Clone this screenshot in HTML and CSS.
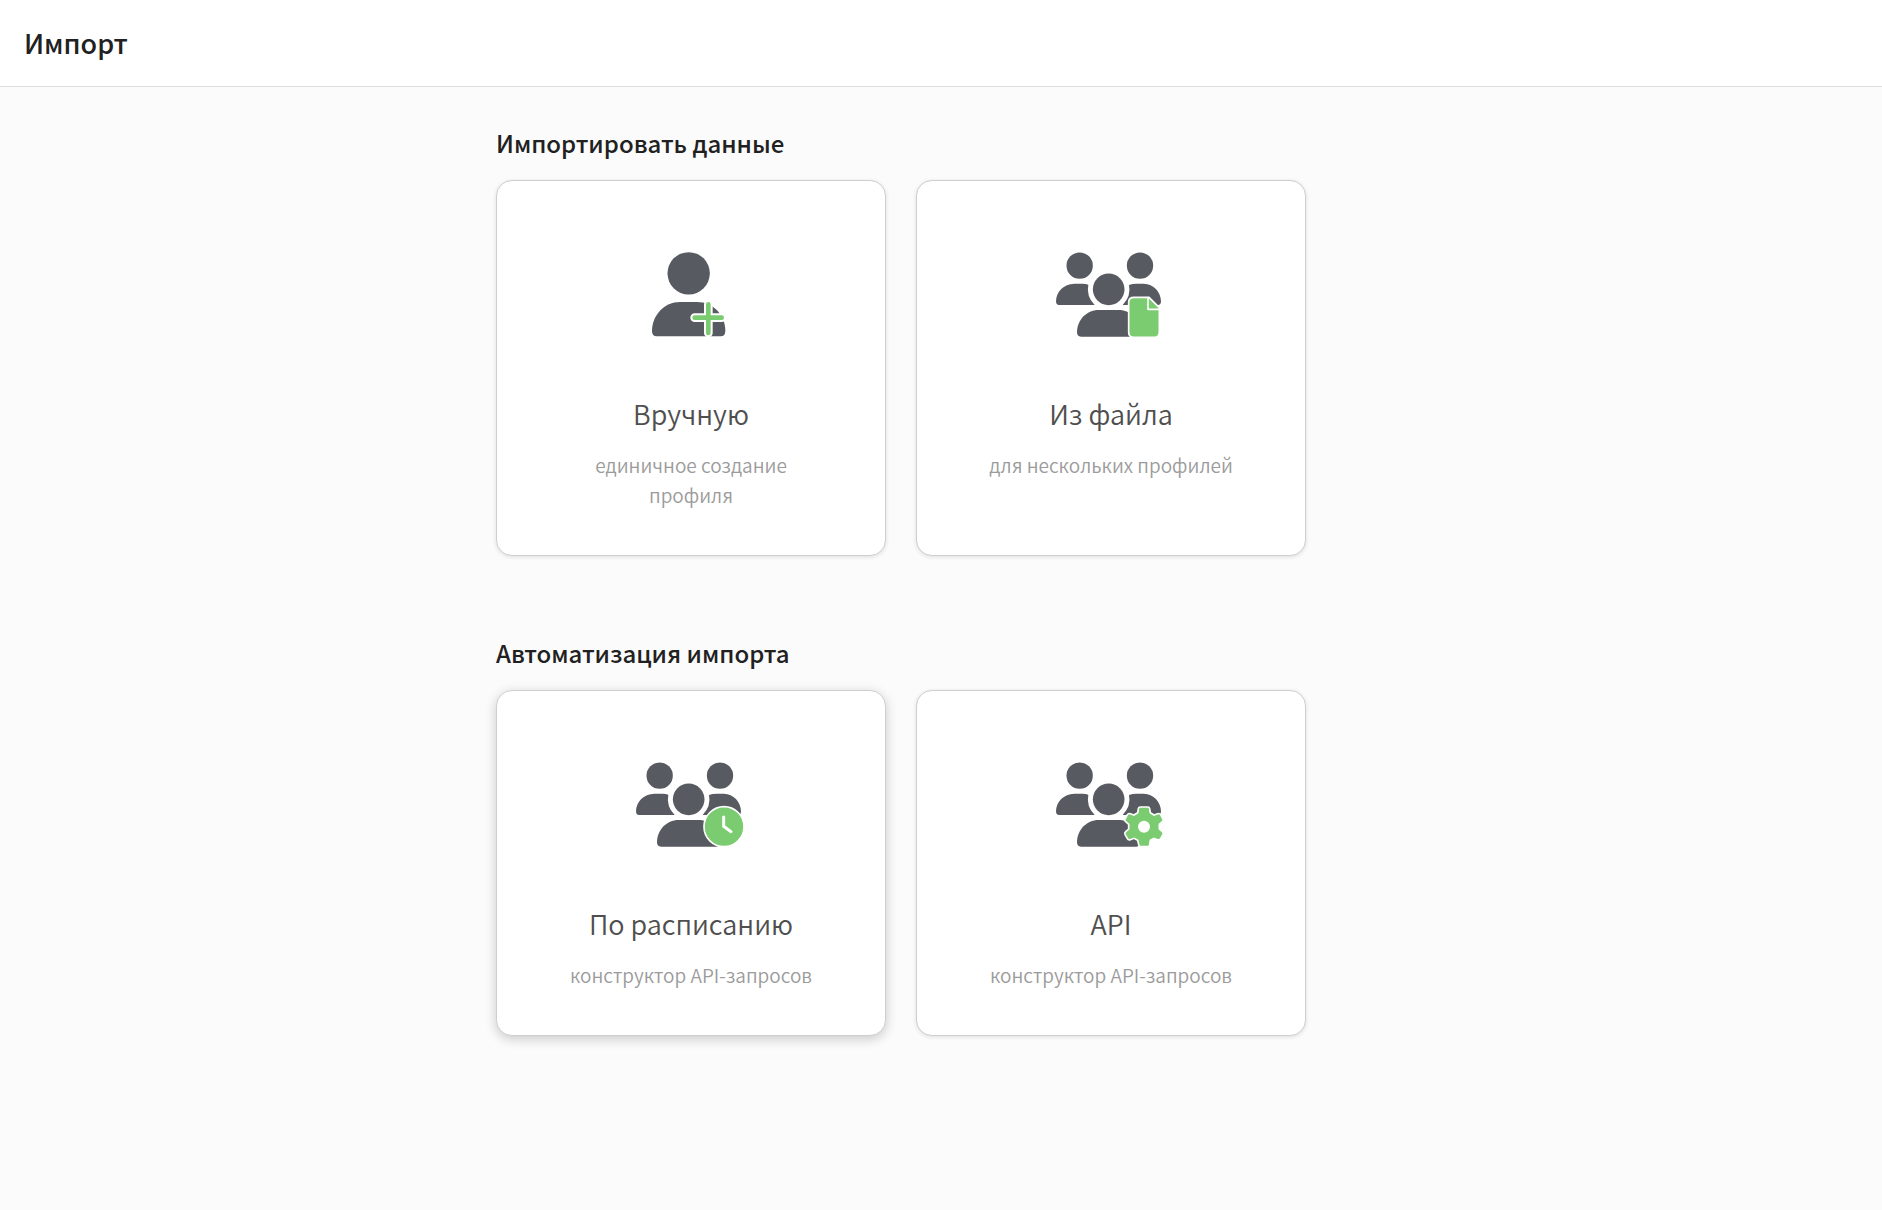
FILE: index.html
```
<!DOCTYPE html>
<html lang="ru">
<head>
    <meta charset="UTF-8">
    <meta name="viewport" content="width=device-width, initial-scale=1.0">
    <title>Импорт</title>
    <link rel="stylesheet" href="styles.css">
</head>
<body>
    <svg class="sprite" aria-hidden="true">
        <symbol id="people" viewBox="33 15 360 300">
            <circle cx="119" cy="89" r="39.500"/>
            <circle cx="300" cy="89" r="39.500"/>
            <path d="M48 196C48 168 71 143 103 143H128Q137 143 145 146Q138 180 164 207H57Q48 207 48 196Z"/>
            <path d="M363 196C363 168 340 143 312 143H290Q277 143 267 147Q274 180 248 207H354Q363 207 363 196Z"/>
            <circle cx="206" cy="160" r="47.500"/>
            <path d="M111 288C111 253 139 222 176 222H236C273 222 301 253 301 288Q301 302 289 302H123Q111 302 111 288Z"/>
        </symbol>
    </svg>

    <header class="header">
        <h1 class="header-title">Импорт</h1>
    </header>

    <main class="content">
        <section class="section">
            <h2 class="section-title">Импортировать данные</h2>
            <div class="cards">
                <a class="card" href="#manual">
                    <svg class="card-icon" viewBox="3 15 360 300" aria-hidden="true">
                        <circle cx="176" cy="112" r="63.500"/>
                        <path d="M66 285C66 238 103 198 150 198H201C250 198 286 238 286 285Q286 301 272 301H80Q66 301 66 285Z"/>
                        <path class="plus-outline" d="M235 205V291M194 245H275"/>
                        <path class="plus" d="M235 205V291M194 245H275"/>
                    </svg>
                    <span class="card-title">Вручную</span>
                    <span class="card-text">единичное создание профиля</span>
                </a>
                <a class="card" href="#file">
                    <svg class="card-icon" viewBox="33 15 360 300" aria-hidden="true">
                        <use href="#people" x="33" y="15" width="360" height="300"/>
                        <path class="badge" d="M282 184H327L358 215V289Q358 304 343 304H282Q266 304 266 289V199Q266 184 282 184Z"/>
                        <path class="fold" d="M324 185V220H357"/>
                    </svg>
                    <span class="card-title">Из файла</span>
                    <span class="card-text">для нескольких профилей</span>
                </a>
            </div>
        </section>

        <section class="section">
            <h2 class="section-title">Автоматизация импорта</h2>
            <div class="cards">
                <a class="card card-active" href="#schedule">
                    <svg class="card-icon" viewBox="33 15 360 300" aria-hidden="true">
                        <use href="#people" x="33" y="15" width="360" height="300"/>
                        <circle class="badge" cx="312" cy="242" r="60"/>
                        <path class="hands" d="M311 213V241L333 257"/>
                    </svg>
                    <span class="card-title">По расписанию</span>
                    <span class="card-text">конструктор API-запросов</span>
                </a>
                <a class="card" href="#api">
                    <svg class="card-icon" viewBox="33 15 360 300" aria-hidden="true">
                        <use href="#people" x="33" y="15" width="360" height="300"/>
                        <path class="badge" d="M301 183H324Q328 183 329 188L331 200L342 207L353 203Q359 201 362 206L369 219Q371 224 367 227L358 235V249L367 257Q371 260 369 265L362 278Q359 283 353 281L342 277L331 283L329 296Q328 302 323 302H302Q297 302 296 296L293 283L282 277L271 281Q265 283 262 278L255 265Q253 260 257 257L266 249V235L257 227Q253 224 255 219L262 206Q265 201 271 203L282 207L293 200L295 188Q296 183 301 183Z"/>
                        <circle class="hole" cx="312" cy="242" r="18"/>
                    </svg>
                    <span class="card-title">API</span>
                    <span class="card-text">конструктор API-запросов</span>
                </a>
            </div>
        </section>
    </main>
</body>
</html>
```
FILE: styles.css
```
* {
    box-sizing: border-box;
}

body {
    margin: 0;
    background-color: #fbfbfb;
    color: #212121;
    font-family: "Source Sans Pro", "Noto Sans CJK SC", "Noto Sans", sans-serif;
}

.sprite {
    display: none;
}

.header {
    padding: 21px 24px;
    background-color: #ffffff;
    border-bottom: 1px solid #dedede;
}

.header-title {
    margin: 0;
    font-size: 27px;
    font-weight: 500;
    line-height: 44px;
}

.content {
    max-width: 890px;
    margin: 0 auto;
    padding: 37px 80px 60px 0;
}

.section {
    margin-bottom: 78px;
}

.section-title {
    margin: 0 0 18px;
    font-size: 24px;
    font-weight: 500;
    line-height: 38px;
}

.cards {
    display: grid;
    grid-template-columns: 1fr 1fr;
    gap: 30px;
}

.card {
    display: flex;
    flex-direction: column;
    align-items: center;
    padding: 60px 60px 45px;
    background-color: #ffffff;
    border: 1px solid #cfcfcf;
    border-radius: 16px;
    box-shadow: 0 1px 4px rgba(0, 0, 0, 0.12);
    text-align: center;
    text-decoration: none;
}

.card-active,
.card:hover {
    box-shadow: 0 3px 12px rgba(0, 0, 0, 0.2);
}

.card-icon {
    width: 120px;
    height: 100px;
    margin-bottom: 51px;
    fill: #585a61;
}

.card-title {
    margin-bottom: 14px;
    color: #4f4f4f;
    font-size: 27px;
    font-weight: 350;
    line-height: 44px;
}

.card-text {
    color: #9b9b9b;
    font-size: 19px;
    font-weight: 350;
    line-height: 30px;
}

.plus,
.plus-outline,
.fold,
.hands {
    fill: none;
    stroke-linecap: round;
    stroke-linejoin: round;
}

.plus {
    stroke: #7bcc70;
    stroke-width: 14px;
}

.plus-outline {
    stroke: #ffffff;
    stroke-width: 26px;
}

.badge {
    fill: #7bcc70;
    stroke: #ffffff;
    stroke-width: 5px;
}

.fold {
    stroke: #ffffff;
    stroke-width: 5px;
}

.hands {
    stroke: #ffffff;
    stroke-width: 9px;
}

.hole {
    fill: #ffffff;
}

@media (max-width: 700px) {
    .content {
        padding: 24px;
    }
    .cards {
        grid-template-columns: 1fr;
    }
}
```
